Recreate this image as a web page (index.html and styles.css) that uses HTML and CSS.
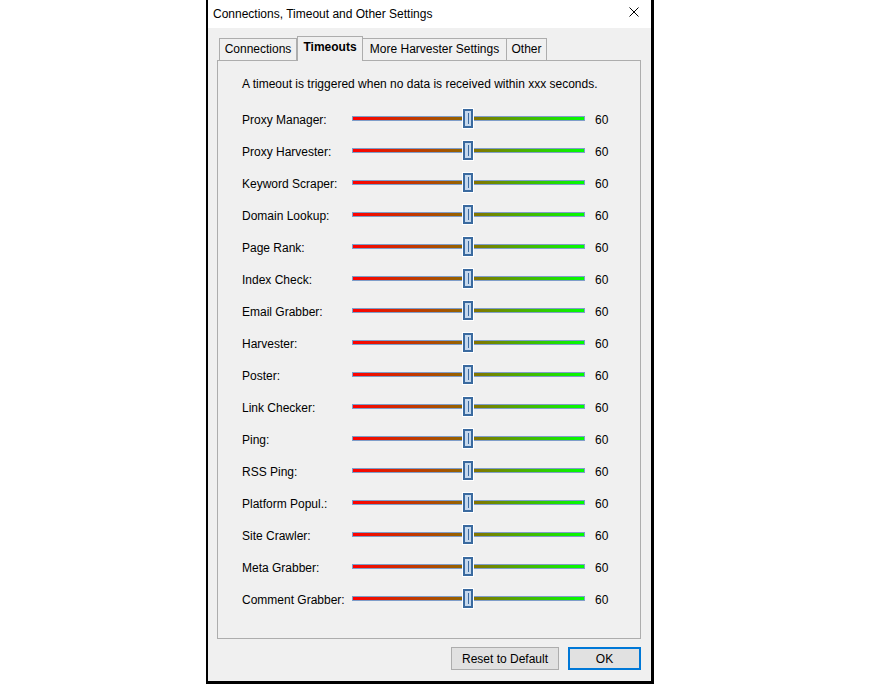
FILE: index.html
```html
<!doctype html>
<html lang="en">
  <head>
    <meta charset="UTF-8" />
    <title>Connections, Timeout and Other Settings</title>
    <link rel="stylesheet" href="styles.css">
  </head>
  <body>
    <div class="window">
      <div class="titleBar">
        <span class="titleText">Connections, Timeout and Other Settings</span>
        <svg class="closeIcon" width="10" height="10" viewBox="0 0 10 10">
          <path d="M0.5 0.5 L9.5 9.5 M9.5 0.5 L0.5 9.5" stroke="#000" stroke-width="1" fill="none"/>
        </svg>
      </div>

      <div class="windowBody">
        <div class="tabs">
          <div class="tab tabConnections">Connections</div>
          <div class="tab tabTimeouts active">Timeouts</div>
          <div class="tab tabHarvester">More Harvester Settings</div>
          <div class="tab tabOther">Other</div>
        </div>

        <div class="panel">
          <p class="intro">A timeout is triggered when no data is received within xxx seconds.</p>

          <div class="rows">
            <div class="row"><span class="rowLabel">Proxy Manager:</span><div class="slider"><div class="track"></div><div class="thumb"></div></div><span class="rowValue">60</span></div>
            <div class="row"><span class="rowLabel">Proxy Harvester:</span><div class="slider"><div class="track"></div><div class="thumb"></div></div><span class="rowValue">60</span></div>
            <div class="row"><span class="rowLabel">Keyword Scraper:</span><div class="slider"><div class="track"></div><div class="thumb"></div></div><span class="rowValue">60</span></div>
            <div class="row"><span class="rowLabel">Domain Lookup:</span><div class="slider"><div class="track"></div><div class="thumb"></div></div><span class="rowValue">60</span></div>
            <div class="row"><span class="rowLabel">Page Rank:</span><div class="slider"><div class="track"></div><div class="thumb"></div></div><span class="rowValue">60</span></div>
            <div class="row"><span class="rowLabel">Index Check:</span><div class="slider"><div class="track"></div><div class="thumb"></div></div><span class="rowValue">60</span></div>
            <div class="row"><span class="rowLabel">Email Grabber:</span><div class="slider"><div class="track"></div><div class="thumb"></div></div><span class="rowValue">60</span></div>
            <div class="row"><span class="rowLabel">Harvester:</span><div class="slider"><div class="track"></div><div class="thumb"></div></div><span class="rowValue">60</span></div>
            <div class="row"><span class="rowLabel">Poster:</span><div class="slider"><div class="track"></div><div class="thumb"></div></div><span class="rowValue">60</span></div>
            <div class="row"><span class="rowLabel">Link Checker:</span><div class="slider"><div class="track"></div><div class="thumb"></div></div><span class="rowValue">60</span></div>
            <div class="row"><span class="rowLabel">Ping:</span><div class="slider"><div class="track"></div><div class="thumb"></div></div><span class="rowValue">60</span></div>
            <div class="row"><span class="rowLabel">RSS Ping:</span><div class="slider"><div class="track"></div><div class="thumb"></div></div><span class="rowValue">60</span></div>
            <div class="row"><span class="rowLabel">Platform Popul.:</span><div class="slider"><div class="track"></div><div class="thumb"></div></div><span class="rowValue">60</span></div>
            <div class="row"><span class="rowLabel">Site Crawler:</span><div class="slider"><div class="track"></div><div class="thumb"></div></div><span class="rowValue">60</span></div>
            <div class="row"><span class="rowLabel">Meta Grabber:</span><div class="slider"><div class="track"></div><div class="thumb"></div></div><span class="rowValue">60</span></div>
            <div class="row"><span class="rowLabel">Comment Grabber:</span><div class="slider"><div class="track"></div><div class="thumb"></div></div><span class="rowValue">60</span></div>
          </div>
        </div>

        <div class="buttons">
          <button class="btn btnReset">Reset to Default</button>
          <button class="btn btnOk">OK</button>
        </div>
      </div>
    </div>
  </body>
</html>
```

FILE: styles.css
```css
body {
  margin: 0;
  background: #fff;
  font-family: 'Liberation Sans', Arial, sans-serif;
  font-size: 12px;
  color: #000;
}

.window {
  margin-left: 206px;
  width: 448px;
  height: 684px;
  box-sizing: border-box;
  border-left: 2px solid #000;
  border-right: 3px solid #000;
  border-bottom: 3px solid #000;
  display: flex;
  flex-direction: column;
}

.titleBar {
  height: 28px;
  flex: none;
  background: #fff;
  display: flex;
  align-items: center;
  justify-content: space-between;
  padding: 0 12px 0 5px;
}
.titleText {
  font-size: 12px;
  margin-top: -1px;
}
.closeIcon {
  display: block;
  margin-top: -4px;
}

.windowBody {
  flex: 1;
  background: #f0f0f0;
  padding: 8px 10px 0 9px;
}

.tabs {
  display: flex;
  align-items: flex-end;
  height: 24px;
  margin-left: 2px;
  position: relative;
  z-index: 1;
}
.tab {
  height: 22px;
  box-sizing: border-box;
  border: 1px solid #adadad;
  border-bottom: none;
  background: #f0f0f0;
  text-align: center;
  line-height: 21px;
  white-space: nowrap;
}
.tab.active {
  height: 25px;
  margin-bottom: -1px;
  font-weight: bold;
  line-height: 21px;
}
.tabConnections { width: 78px; }
.tabTimeouts { width: 66px; }
.tabHarvester { width: 145px; margin-left: -1px; }
.tabOther { width: 41px; margin-left: -1px; }

.panel {
  height: 579px;
  box-sizing: border-box;
  border: 1px solid #adadad;
  padding: 16px 0 0 24px;
}

.intro {
  margin: 0;
  line-height: 14px;
}

.rows {
  margin-top: 13px;
}
.row {
  display: flex;
  align-items: flex-start;
  height: 32px;
  line-height: 32px;
}
.rowLabel {
  width: 110px;
  flex: none;
  white-space: nowrap;
}
.rowValue {
  margin-left: 10px;
}

.slider {
  position: relative;
  width: 233px;
  height: 19px;
  margin-top: 5px;
}
.track {
  height: 5px;
  margin-top: 7px;
  box-sizing: border-box;
  border: 1px solid #7f9dc9;
  background: linear-gradient(to right, #ff0000, #8c6a00 50%, #00ff00);
}
.thumb {
  position: absolute;
  left: 111px;
  top: 0;
  width: 10px;
  height: 19px;
  box-sizing: border-box;
  border: 2px solid #3a6a9f;
  background: #c6d9ee;
  box-shadow: 0 0 0 1px #fff;
  display: flex;
  align-items: center;
  justify-content: center;
}
.thumb:after {
  content: "";
  width: 1px;
  height: 11px;
  background: #3a6a9f;
}

.buttons {
  display: flex;
  justify-content: flex-end;
  gap: 9px;
  margin-top: 8px;
}
.btn {
  height: 23px;
  box-sizing: border-box;
  background: #e1e1e1;
  border: 1px solid #adadad;
  font-family: 'Liberation Sans', Arial, sans-serif;
  font-size: 12px;
  color: #000;
  padding: 0;
}
.btnReset { width: 108px; }
.btnOk {
  width: 73px;
  border: 2px solid #0078d7;
}
```
